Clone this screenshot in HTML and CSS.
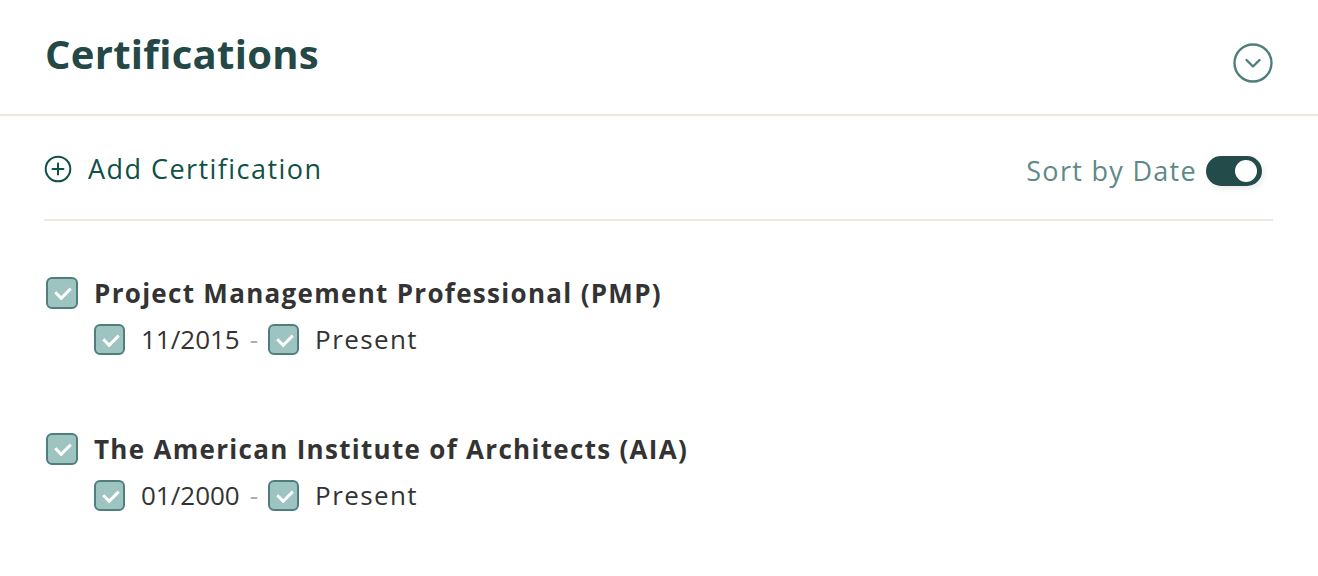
FILE: index.html
```html
<!DOCTYPE html>
<html lang="en">
<head>
    <meta charset="UTF-8">
    <meta name="viewport" content="width=device-width, initial-scale=1.0">
    <title>Certifications</title>
    <link rel="stylesheet" href="styles.css">
</head>
<body>
    <section class="panel">
        <!-- Header -->
        <div class="panel-header">
            <h2 class="panel-title">Certifications</h2>
            <button class="collapse-button" aria-label="Collapse">
                <svg width="42" height="42" viewBox="0 0 42 42">
                    <circle cx="21" cy="21" r="18.5" fill="none" stroke="#4f7f7b" stroke-width="2.4"/>
                    <path d="M14.5 18 L21 24.5 L27.5 18" fill="none" stroke="#4f7f7b" stroke-width="2.4" stroke-linecap="round" stroke-linejoin="round"/>
                </svg>
            </button>
        </div>

        <div class="panel-body">
            <div class="toolbar">
                <button class="add-button">
                    <svg width="28" height="28" viewBox="0 0 28 28">
                        <circle cx="14" cy="14" r="12.3" fill="none" stroke="#0f5146" stroke-width="2"/>
                        <path d="M14 8.5 V19.5 M8.5 14 H19.5" stroke="#0f5146" stroke-width="2" stroke-linecap="round"/>
                    </svg>
                    <span>Add Certification</span>
                </button>
                <label class="sort-toggle">
                    <span>Sort by Date</span>
                    <span class="switch"><span class="knob"></span></span>
                </label>
            </div>

            <ul class="cert-list">
                <li class="cert">
                    <div class="cert-name">
                        <span class="check"></span>
                        <span>Project Management Professional (PMP)</span>
                    </div>
                    <div class="cert-dates">
                        <span class="check small"></span>
                        <span class="date">11/2015</span>
                        <span class="dash">-</span>
                        <span class="check small"></span>
                        <span class="present">Present</span>
                    </div>
                </li>
                <li class="cert">
                    <div class="cert-name">
                        <span class="check"></span>
                        <span>The American Institute of Architects (AIA)</span>
                    </div>
                    <div class="cert-dates">
                        <span class="check small"></span>
                        <span class="date">01/2000</span>
                        <span class="dash">-</span>
                        <span class="check small"></span>
                        <span class="present">Present</span>
                    </div>
                </li>
            </ul>
        </div>
    </section>
</body>
</html>
```

FILE: styles.css
```css
body {
    margin: 0;
    padding: 0;
    font-family: 'Open Sans', 'Lato', sans-serif;
    background: #ffffff;
    color: #333333;
}

.panel {
    width: 100%;
}

.panel-header {
    display: flex;
    justify-content: space-between;
    align-items: center;
    height: 116px;
    padding: 0 44px 0 45px;
    border-bottom: 2px solid #ece6de;
    box-sizing: border-box;
}

.panel-title {
    margin: 0 0 8px 0;
    font-size: 40px;
    font-weight: 700;
    color: #234846;
    letter-spacing: 0.3px;
}

.collapse-button {
    background: none;
    border: none;
    padding: 0;
    margin-top: 12px;
    cursor: pointer;
    display: flex;
}

.panel-body {
    padding: 0 45px 0 44px;
}

.toolbar {
    display: flex;
    justify-content: space-between;
    align-items: center;
    height: 105px;
    border-bottom: 2px solid #ece6de;
    box-sizing: border-box;
}

.add-button {
    display: flex;
    align-items: center;
    gap: 16px;
    background: none;
    border: none;
    padding: 0;
    font-family: inherit;
    font-size: 27px;
    letter-spacing: 1.45px;
    color: #0f5146;
    cursor: pointer;
    margin-top: 2px;
}

.sort-toggle {
    display: flex;
    align-items: center;
    gap: 9px;
    font-size: 27px;
    letter-spacing: 1.3px;
    color: #5e8a86;
    margin: 6px 11px 0 0;
}

.switch {
    width: 56px;
    height: 30px;
    border-radius: 15px;
    background: #234b4a;
    position: relative;
    box-shadow: 2px 3px 6px rgba(0, 0, 0, 0.08);
}

.knob {
    position: absolute;
    top: 4px;
    right: 5px;
    width: 22px;
    height: 22px;
    border-radius: 50%;
    background: #ffffff;
}

.cert-list {
    list-style: none;
    margin: 0;
    padding: 54px 0 0 2px;
}

.cert {
    margin-bottom: 74px;
}

.cert-name {
    display: flex;
    align-items: center;
    gap: 16px;
    font-size: 26px;
    font-weight: 700;
    letter-spacing: 1.3px;
    color: #333333;
}

.cert-dates {
    display: flex;
    align-items: center;
    margin: 10px 0 0 48px;
    font-size: 26px;
    color: #333333;
}

.cert-dates .check {
    margin-right: 16px;
}

.date {
    letter-spacing: 0;
}

.dash {
    color: #aaaaaa;
    margin: 0 10px;
}

.present {
    letter-spacing: 1.4px;
}

.check {
    display: inline-block;
    width: 28px;
    height: 28px;
    border: 2px solid #4f7f7b;
    border-radius: 6px;
    background: #9dc4c1;
    position: relative;
    flex-shrink: 0;
    box-sizing: content-box;
}

.check::after {
    content: '';
    position: absolute;
    left: 10px;
    top: 5px;
    width: 7px;
    height: 12px;
    border: solid #ffffff;
    border-width: 0 3px 3px 0;
    transform: rotate(45deg);
}

.check.small {
    width: 27px;
    height: 27px;
}
```
